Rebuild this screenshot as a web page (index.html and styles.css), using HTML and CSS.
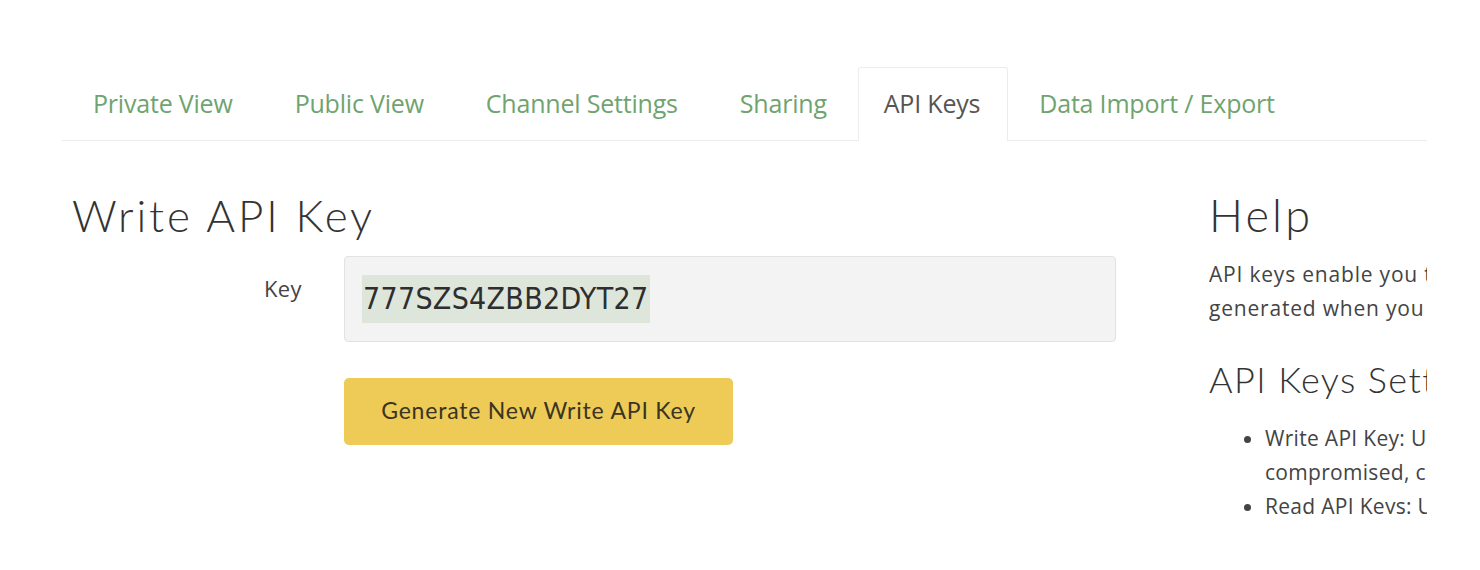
FILE: index.html
```html
<!DOCTYPE html>
<html lang="en">
<head>
<meta charset="utf-8">
<title>API Keys</title>
<link rel="stylesheet" href="styles.css">
</head>
<body>
<div class="page">
  <nav class="tabs">
    <a class="tab">Private View</a>
    <a class="tab">Public View</a>
    <a class="tab">Channel Settings</a>
    <a class="tab">Sharing</a>
    <a class="tab active">API Keys</a>
    <a class="tab">Data Import / Export</a>
  </nav>
  <div class="content">
    <section class="main">
      <h1 class="title">Write API Key</h1>
      <div class="form-row">
        <label class="label">Key</label>
        <div class="input"><span class="key">777SZS4ZBB2DYT27</span></div>
      </div>
      <div class="actions">
        <button class="btn">Generate New Write API Key</button>
      </div>
    </section>
    <aside class="help">
      <h2 class="help-title">Help</h2>
      <p class="help-text">API keys enable you to write data to a channel or read data from a private channel. API keys are auto-<br>generated when you create a new channel.</p>
      <h3 class="help-sub">API Keys Settings</h3>
      <ul class="help-list">
        <li>Write API Key: Use this key to write data to a channel. If you feel your key has been<br>compromised, click Generate New Write API Key.</li>
        <li>Read API Keys: Use this key to allow other people to view your private channel feeds and charts.</li>
      </ul>
    </aside>
  </div>
</div>
</body>
</html>
```

FILE: styles.css
```css
* { box-sizing: border-box; }
html, body { margin: 0; padding: 0; background: #fff; }
body { width: 1480px; height: 570px; overflow: hidden; }

.page {
  padding: 67px 53px 0 62px;
}

.tabs {
  display: flex;
  width: 1365px;
  border-bottom: 1px solid #ececec;
  height: 74px;
}
.tab {
  display: block;
  padding: 0 30px;
  line-height: 70px;
  font-family: "Open Sans", "Noto Sans", sans-serif;
  font-size: 25px;
  color: #6fa36f;
  border: 1px solid transparent;
  border-bottom: none;
  letter-spacing: -0.2px;
  white-space: nowrap;
}
.tab.active {
  color: #555;
  background: #fff;
  border-color: #ececec;
  border-radius: 3px 3px 0 0;
  margin-bottom: -1px;
  padding: 0 27px 0 25px;
}

.content {
  display: flex;
}

.main {
  width: 1055px;
}
.title {
  margin: 48px 0 0 10px;
  font-family: "Lato", sans-serif;
  font-weight: 300;
  font-size: 44px;
  line-height: 52px;
  color: #333;
  letter-spacing: 2.9px;
}

.form-row {
  display: flex;
  align-items: flex-start;
  margin-top: 15px;
}
.label {
  width: 240px;
  text-align: right;
  padding-top: 17px;
  font-family: "Open Sans", "Noto Sans", sans-serif;
  font-size: 22px;
  color: #444;
  letter-spacing: 0.4px;
}
.input {
  margin-left: 42px;
  width: 772px;
  height: 86px;
  background: #f3f3f3;
  border: 1px solid #e2e2e2;
  border-radius: 4px;
  padding: 18px 0 0 17px;
}
.key {
  display: inline-block;
  background: #dee6db;
  font-family: "DejaVu Sans Condensed", "DejaVu Sans", sans-serif;
  font-stretch: condensed;
  font-size: 30px;
  line-height: 48px;
  color: #2e2e2e;
  padding: 0 2px 0 1px;
  letter-spacing: 0.3px;
}

.actions {
  margin: 36px 0 0 282px;
}
.btn {
  width: 389px;
  height: 67px;
  border: none;
  border-radius: 5px;
  background: #edcb56;
  font-family: "Lato", sans-serif;
  font-size: 23px;
  letter-spacing: 0.8px;
  color: #3a3422;
  padding: 0 0 3px 0;
}

.help {
  margin-left: 92px;
  width: 218px;
  height: 373px;
  overflow: hidden;
  white-space: nowrap;
  font-family: "Open Sans", "Noto Sans", sans-serif;
}
.help-title {
  margin: 49px 0 0 0;
  font-family: "Lato", sans-serif;
  font-weight: 300;
  font-size: 45px;
  line-height: 50px;
  color: #333;
  letter-spacing: 3.2px;
}
.help-text {
  margin: 17px 0 0 0;
  font-size: 21px;
  line-height: 34px;
  color: #444;
  letter-spacing: 0.8px;
}
.help-sub {
  margin: 32px 0 0 0;
  font-family: "Lato", sans-serif;
  font-weight: 300;
  font-size: 36px;
  line-height: 44px;
  color: #333;
  letter-spacing: 1.4px;
}
.help-list {
  margin: 20px 0 0 0;
  padding-left: 56px;
  font-size: 21px;
  line-height: 34px;
  color: #444;
  letter-spacing: 0.3px;
}
```
